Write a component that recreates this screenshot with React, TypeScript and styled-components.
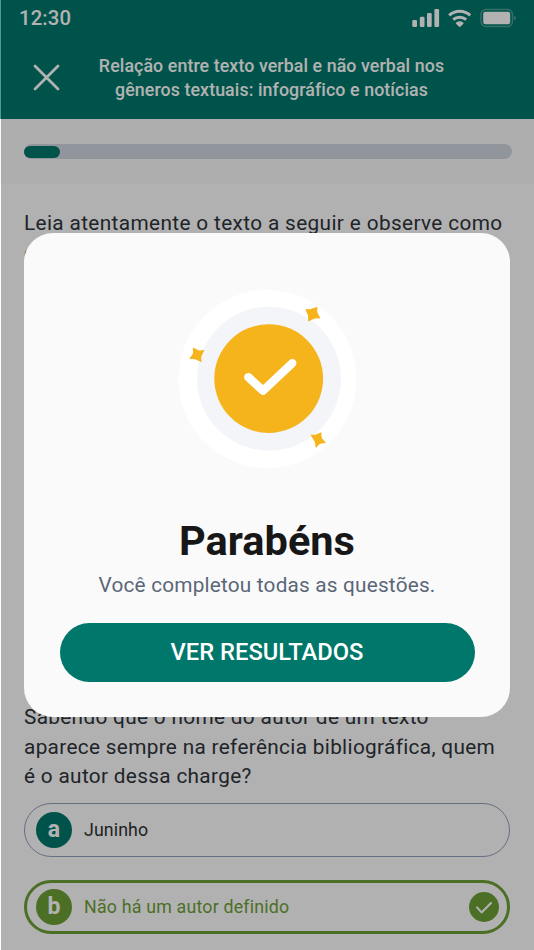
import React from "react";
import styled, { createGlobalStyle } from "styled-components";

const GlobalStyle = createGlobalStyle`
  * { box-sizing: border-box; }
  html, body { margin: 0; padding: 0; background: #fff; }
  body { font-family: Roboto, "Liberation Sans", sans-serif; overflow: hidden; }
  h1, h2, p { margin: 0; }
  svg { display: block; }
`;

const Screen = styled.main`
  position: relative;
  width: 534px;
  height: 950px;
  overflow: hidden;
  background: #fefefe;
`;

const Header = styled.header`
  height: 119px;
  border-left: 1px solid #4c9a90;
  background: #00776b;
  color: #fff;
`;

const StatusBar = styled.div`
  display: flex;
  height: 36px;
  padding: 0 18px 0 18px;
  align-items: center;
  justify-content: space-between;
`;

const Clock = styled.span`
  font-size: 20.3px;
  font-weight: 500;
  line-height: 24px;
  letter-spacing: 0.15px;
`;

const TitleRow = styled.div`
  display: flex;
  align-items: center;
  height: 82px;
  padding-left: 31px;
`;

const CloseButton = styled.button`
  display: flex;
  width: 28px;
  height: 28px;
  padding: 0;
  border: 0;
  background: none;
  color: #fff;
`;

const Title = styled.h1`
  width: 423px;
  padding-top: 1px;
  text-align: center;
  font-size: 17.8px;
  font-weight: 500;
  line-height: 23.7px;
  letter-spacing: 0.09px;
  white-space: nowrap;
`;

const ProgressSection = styled.section`
  display: flex;
  height: 65px;
  padding: 0 22px 0 24px;
  align-items: center;
  background: #f9f9f9;
`;

const Track = styled.div`
  display: flex;
  flex: 1;
  height: 15px;
  align-items: center;
  border-radius: 8px;
  background: #d0d7e1;
`;

const Fill = styled.div`
  width: 36px;
  height: 12px;
  border-radius: 6px;
  background: #00776b;
`;

const Content = styled.section`
  padding: 25px 24px 0;
`;

const Paragraph = styled.p<{ $spacing: number }>`
  font-size: 20.77px;
  line-height: 29.67px;
  letter-spacing: ${(p) => p.$spacing}px;
  color: #2f343b;
  white-space: nowrap;
`;

const Passage = styled.div`
  height: 494px;
`;

const Answers = styled.div`
  display: flex;
  flex-direction: column;
  gap: 23px;
  margin-top: 11px;
`;

const Answer = styled.div<{ $selected?: boolean }>`
  display: flex;
  align-items: center;
  height: 54px;
  padding: 0 ${(p) => (p.$selected ? 8.5 : 10)}px;
  border: ${(p) => (p.$selected ? "3px solid #6e9f37" : "1.5px solid #949fba")};
  padding-left: ${(p) => (p.$selected ? 9 : 11)}px;
  border-radius: 27px;
  color: ${(p) => (p.$selected ? "#6e9f37" : "#2f3033")};
`;

const Letter = styled.span<{ $selected?: boolean }>`
  display: flex;
  width: 36px;
  height: 36px;
  align-items: center;
  justify-content: center;
  border-radius: 50%;
  background: ${(p) => (p.$selected ? "#6e9f37" : "#00776b")};
  color: #fff;
  font-size: 23px;
  line-height: 36px;
  font-weight: 700;
`;

const AnswerText = styled.span<{ $spacing: number }>`
  flex: 1;
  margin-left: 12px;
  padding-bottom: 2px;
  font-size: 17.8px;
  letter-spacing: ${(p) => p.$spacing}px;
`;

const Overlay = styled.div`
  position: absolute;
  inset: 0 0 0 1px;
  display: flex;
  justify-content: center;
  align-items: flex-start;
  padding: 232.5px 24px 0 23px;
  background: rgba(0, 0, 0, 0.3);
`;

const Dialog = styled.section`
  display: flex;
  flex-direction: column;
  align-items: center;
  width: 486px;
  height: 484.5px;
  padding-top: 57.5px;
  border-radius: 29px;
  background: #fafafa;
`;

const Heading = styled.h2`
  margin-top: 46px;
  font-size: 41.5px;
  font-weight: 700;
  line-height: 50px;
  color: #171717;
`;

const Message = styled.p`
  margin-top: 4px;
  font-size: 20.77px;
  line-height: 30px;
  letter-spacing: 0.2px;
  color: #5b6679;
`;

const ResultsButton = styled.button`
  width: 415px;
  height: 59.3px;
  margin-top: 22.5px;
  padding: 0;
  border: 0;
  border-radius: 30px;
  background: #00776b;
  color: #fff;
  font-family: inherit;
  font-size: 23.73px;
  font-weight: 500;
  line-height: 58px;
`;

const StatusIcons = () => (
  <svg width="104" height="20" viewBox="412 8 104 20" fill="#fff">
    <rect x="412.3" y="20" width="4.7" height="7" rx="1.2" />
    <rect x="419.8" y="16.8" width="4.7" height="10.2" rx="1.2" />
    <rect x="427" y="13" width="4.7" height="14" rx="1.2" />
    <rect x="434.4" y="9" width="4.7" height="18" rx="1.2" />
    <path d="M449.2 15.4a15.3 15.3 0 0 1 21 0" fill="none" stroke="#fff" strokeWidth="3.1" />
    <path d="M453.2 19.7a9.8 9.8 0 0 1 13 0" fill="none" stroke="#fff" strokeWidth="3.1" />
    <path d="M456 22.8q3.7-2.9 7.4 0 .5.4 0 .9l-3.1 3q-.6.5-1.2 0l-3.1-3q-.5-.5 0-.9z" />
    <rect x="481" y="9.5" width="31.5" height="17" rx="5" fill="none" stroke="#fff" strokeOpacity=".3" strokeWidth="1.4" />
    <rect x="483.2" y="11.8" width="27" height="12.5" rx="2.2" />
    <path d="M514.3 16q1.4.7 1.4 2.1t-1.4 2.1z" opacity=".45" />
  </svg>
);

const SuccessBadge = () => (
  <svg width="180" height="180" viewBox="177 290 180 180">
    <circle cx="267.3" cy="379" r="89" fill="#fff" />
    <circle cx="269" cy="378.7" r="72" fill="#f4f5f8" />
    <circle cx="268.7" cy="378.6" r="54.4" fill="#f5b41b" />
    <path d="M248.3 377.2 263 390.7 292.2 363.2" fill="none" stroke="#fff" strokeWidth="8.4" strokeLinecap="round" strokeLinejoin="round" />
    <g fill="#f5b41b" stroke="#f5b41b" strokeWidth="1.2" strokeLinejoin="round">
      <path d="M306.2 309.7Q309.5 310.3 311.7 309.3L316.9 307.5Q316.2 311.3 317 313L319.5 318Q315.8 317.3 313.6 318.3L308.7 320.8Q309.3 316.8 308.3 314.4Z" />
      <path d="M193.3 348.3L198.2 350.7Q200 351.4 203.6 350.5L201.2 355.2Q200.2 357 201 361.3L196 359Q194.2 358.2 190.2 358.5L193.1 354.5Q194.3 352.8 193.3 348.3Z" />
      <path d="M311.4 435.2Q315.3 435.8 317.1 434.8L320.9 433.1Q320.5 437 321.4 438.7L325 442.6Q321.3 442.3 319.6 443.4L316 446.9Q316.2 443 315.1 441.1Z" />
    </g>
  </svg>
);

const CheckCircle = () => (
  <svg width="30" height="30" viewBox="0 0 30 30">
    <circle cx="15" cy="15" r="15" fill="#6e9f37" />
    <path d="m8 15.4 4.6 5L22 11" fill="none" stroke="#fff" strokeWidth="2.1" strokeLinecap="round" strokeLinejoin="round" />
  </svg>
);

export default function App() {
  return (
    <>
      <GlobalStyle />
      <Screen>
        <Header>
          <StatusBar>
            <Clock>12:30</Clock>
            <StatusIcons />
          </StatusBar>
          <TitleRow>
            <CloseButton aria-label="Fechar">
              <svg width="28" height="28" viewBox="0 0 28 28" fill="none" stroke="currentColor" strokeWidth="2.8" strokeLinecap="round">
                <path d="m3 3 23 23M26 3 3 26" />
              </svg>
            </CloseButton>
            <Title>
              Relação entre texto verbal e não verbal nos
              <br />
              gêneros textuais: infográfico e notícias
            </Title>
          </TitleRow>
        </Header>
        <ProgressSection>
          <Track>
            <Fill />
          </Track>
        </ProgressSection>
        <Content>
          <Passage>
            <Paragraph $spacing={0.37}>
              Leia atentamente o texto a seguir e observe como
              <br />o
            </Paragraph>
          </Passage>
          <Paragraph $spacing={0.33}>
            Sabendo que o nome do autor de um texto
            <br />
            aparece sempre na referência bibliográfica, quem
            <br />é o autor dessa charge?
          </Paragraph>
          <Answers>
            <Answer>
              <Letter>a</Letter>
              <AnswerText $spacing={0.1}>Juninho</AnswerText>
            </Answer>
            <Answer $selected>
              <Letter $selected>b</Letter>
              <AnswerText $spacing={0.2}>Não há um autor definido</AnswerText>
              <CheckCircle />
            </Answer>
          </Answers>
        </Content>
        <Overlay>
          <Dialog role="dialog" aria-modal="true">
            <SuccessBadge />
            <Heading>Parabéns</Heading>
            <Message>Você completou todas as questões.</Message>
            <ResultsButton>VER RESULTADOS</ResultsButton>
          </Dialog>
        </Overlay>
      </Screen>
    </>
  );
}
